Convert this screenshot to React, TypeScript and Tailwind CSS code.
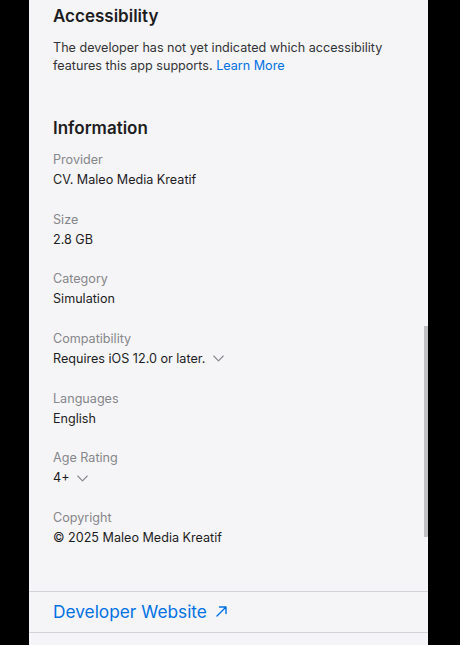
const info = [
  { label: 'Provider', value: 'CV. Maleo Media Kreatif' },
  { label: 'Size', value: '2.8 GB' },
  { label: 'Category', value: 'Simulation' },
  { label: 'Compatibility', value: 'Requires iOS 12.0 or later.', more: true },
  { label: 'Languages', value: 'English' },
  { label: 'Age Rating', value: '4+', more: true },
  { label: 'Copyright', value: '© 2025 Maleo Media Kreatif' },
]

function Chevron() {
  return (
    <svg width="11" height="7" viewBox="0 0 11 7" className="ml-2 text-[#86868b]" fill="none">
      <path d="M0.8 1 L5.5 5.8 L10.2 1" stroke="currentColor" strokeWidth="1.1" strokeLinecap="round" strokeLinejoin="round" />
    </svg>
  )
}

export default function App() {
  return (
    <div className="flex h-[645px] w-[460px] overflow-hidden bg-black font-['Inter','Liberation_Sans',sans-serif]">
      <div className="relative ml-[29px] w-[399px] bg-[#f5f5f7] text-[#1d1d1f]">
        {/* Accessibility */}
        <section className="px-6 pt-1">
          <h2 className="text-[17px] font-semibold leading-6">Accessibility</h2>
          <p className="mt-[11px] text-[12.6px] leading-[18px] text-[#333336]">
            The developer has not yet indicated which accessibility features this app supports.{' '}
            <span className="text-[#0071e3]">Learn More</span>
          </p>
        </section>

        {/* Information */}
        <section className="mt-[41px] px-6">
          <h2 className="text-[17px] font-semibold leading-6">Information</h2>
          <dl className="mt-[10px] flex flex-col gap-[19.67px]">
            {info.map((row) => (
              <div key={row.label}>
                <dt className="text-[12.6px] leading-5 text-[#86868b]">{row.label}</dt>
                <dd className="flex items-center text-[12.6px] leading-5 text-[#1d1d1f]">
                  {row.value}
                  {row.more && <Chevron />}
                </dd>
              </div>
            ))}
          </dl>
        </section>

        {/* Developer website */}
        <div className="mt-[43px] border-y border-[#d2d2d7]">
          <div className="flex h-10 items-center px-6 text-[17.3px] text-[#0071e3]">
            Developer Website
            <svg width="11" height="11" viewBox="0 0 11 11" className="ml-[9px]" fill="none">
              <path d="M1 10 L10 1 M3.5 1 H10 V7.5" stroke="currentColor" strokeWidth="1.4" strokeLinecap="round" strokeLinejoin="round" />
            </svg>
          </div>
        </div>

        {/* scroll indicator */}
        <div className="absolute right-0 top-[326px] h-[211px] w-1 bg-[#c1c1c5]" />
      </div>
    </div>
  )
}
